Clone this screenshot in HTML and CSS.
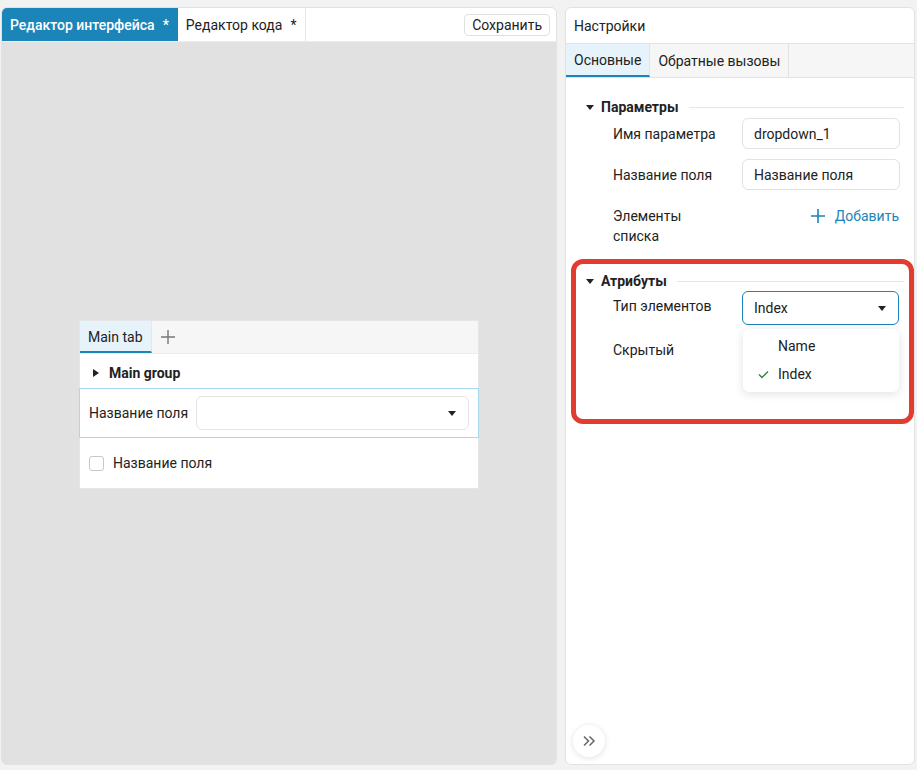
FILE: index.html
```html
<!DOCTYPE html>
<html>
    <head>
        <title>Редактор формы</title>
        <link rel="stylesheet" href="styles.css">
    </head>
    <body>
        <div class="app">
            <div class="editor">
                <div class="editor-bar">
                    <div class="editor-tab active">Редактор интерфейса<span class="star">*</span></div>
                    <div class="editor-tab">Редактор кода<span class="star">*</span></div>
                    <button class="save-btn">Сохранить</button>
                </div>
                <div class="canvas">
                    <div class="widget">
                        <div class="widget-tabs">
                            <div class="widget-tab">Main tab</div>
                            <div class="add-tab">
                                <svg width="16" height="16" viewBox="0 0 16 16"><path d="M8 1v14M1 8h14" stroke="#777" stroke-width="1.4" fill="none"/></svg>
                            </div>
                        </div>
                        <div class="group-title"><span class="tri-right"></span>Main group</div>
                        <div class="field-row">
                            <span class="field-label">Название поля</span>
                            <div class="field-select"><span class="tri-down"></span></div>
                        </div>
                        <div class="check-row">
                            <span class="checkbox"></span>
                            <span>Название поля</span>
                        </div>
                    </div>
                </div>
            </div>

            <div class="settings">
                <div class="settings-head">Настройки</div>
                <div class="settings-tabs">
                    <div class="s-tab active">Основные</div>
                    <div class="s-tab">Обратные вызовы</div>
                </div>
                <div class="settings-body">
                    <div class="section">
                        <div class="section-title"><span class="tri-down"></span>Параметры<span class="rule"></span></div>
                        <div class="prop-row">
                            <div class="prop-label">Имя параметра</div>
                            <div class="prop-input">dropdown_1</div>
                        </div>
                        <div class="prop-row">
                            <div class="prop-label">Название поля</div>
                            <div class="prop-input">Название поля</div>
                        </div>
                        <div class="prop-row top list-row">
                            <div class="prop-label">Элементы списка</div>
                            <div class="add-link">
                                <svg width="14" height="14" viewBox="0 0 14 14"><path d="M7 0v14M0 7h14" stroke="#1b84b8" stroke-width="1.6" fill="none"/></svg>
                                Добавить
                            </div>
                        </div>
                    </div>

                    <div class="section marked">
                        <div class="highlight"></div>
                        <div class="section-title"><span class="tri-down"></span>Атрибуты<span class="rule"></span></div>
                        <div class="prop-row top">
                            <div class="prop-label">Тип элементов</div>
                            <div class="prop-input select">Index<span class="tri-down"></span></div>
                        </div>
                        <div class="prop-row top">
                            <div class="prop-label">Скрытый</div>
                        </div>
                        <div class="menu">
                            <div class="menu-item">Name</div>
                            <div class="menu-item checked">
                                <svg class="check" width="11" height="9" viewBox="0 0 11 9"><path d="M1 4.5l3 3L10 1.5" stroke="#2e8540" stroke-width="1.4" fill="none"/></svg>
                                Index
                            </div>
                        </div>
                    </div>
                </div>
                <div class="collapse-btn">
                    <svg width="14" height="12" viewBox="0 0 14 12"><path d="M2 1.5l4.5 4.5L2 10.5M7.5 1.5L12 6l-4.5 4.5" stroke="#666" stroke-width="1.5" fill="none"/></svg>
                </div>
            </div>
        </div>
    </body>
</html>
```

FILE: styles.css
```css
*{
    box-sizing: border-box;
}
body{
    margin: 0;
    background-color: #f2f2f2;
    font-family: Roboto, "Liberation Sans", sans-serif;
    font-size: 14px;
    color: #222;
}
.app{
    display: flex;
    gap: 8px;
    height: 770px;
    padding: 7px 2px 5px 1px;
}

/* left: editor */
.editor{
    width: 556px;
    display: flex;
    flex-direction: column;
    border: 1px solid #e2e2e2;
    border-radius: 6px;
    overflow: hidden;
    background-color: #e1e1e1;
}
.editor-bar{
    display: flex;
    height: 34px;
    background-color: white;
    border-bottom: 1px solid #ececec;
}
.editor-tab{
    display: flex;
    align-items: center;
    padding: 0 9px 0 8px;
    border-right: 1px solid #e6e6e6;
    color: #222;
}
.editor-tab.active{
    background-color: #1b84b8;
    color: white;
    font-weight: 500;
    border-right: 0;
}
.star{
    margin-left: 8px;
}
.save-btn{
    margin: 6px 6px 5px auto;
    padding: 0 7px;
    border: 1px solid #e0e0e0;
    border-radius: 4px;
    background-color: white;
    font-family: Roboto, "Liberation Sans", sans-serif;
    font-size: 14px;
    color: #222;
}
.canvas{
    flex: 1;
    display: flex;
    align-items: center;
    justify-content: center;
    padding-top: 3px;
}
.widget{
    width: 400px;
    background-color: white;
    border: 1px solid #e6e6e6;
}
.widget-tabs{
    display: flex;
    height: 33px;
    background-color: #f6f6f6;
    border-bottom: 1px solid #ececec;
}
.widget-tab{
    display: flex;
    align-items: center;
    padding: 2px 8px 0;
    background-color: #e7f3fa;
    border-bottom: 2px solid #1b84b8;
    border-right: 1px solid #e6e6e6;
}
.add-tab{
    display: flex;
    align-items: center;
    padding: 0 8px 0 8px;
}
.group-title{
    display: flex;
    align-items: center;
    height: 34px;
    padding: 3px 0 0 13px;
    font-weight: bold;
}
.tri-right{
    width: 0;
    height: 0;
    border-top: 4px solid transparent;
    border-bottom: 4px solid transparent;
    border-left: 6px solid #222;
    margin-right: 10px;
}
.tri-down{
    width: 0;
    height: 0;
    border-left: 4.5px solid transparent;
    border-right: 4.5px solid transparent;
    border-top: 5px solid #222;
}
.field-row{
    display: flex;
    align-items: center;
    gap: 8px;
    height: 50px;
    padding: 0 9px;
    border: 1px solid #a9d9f0;
    margin: 0 -1px;
}
.field-select{
    flex: 1;
    height: 34px;
    border: 1px solid #e4e4e4;
    border-radius: 6px;
    display: flex;
    align-items: center;
    justify-content: flex-end;
    padding-right: 12px;
}
.check-row{
    display: flex;
    align-items: center;
    gap: 9px;
    height: 50px;
    padding: 0 9px;
}
.checkbox{
    width: 15px;
    height: 15px;
    border: 1px solid #c8c8c8;
    border-radius: 3px;
}

/* right: settings */
.settings{
    flex: 1;
    display: flex;
    flex-direction: column;
    position: relative;
    background-color: white;
    border: 1px solid #e2e2e2;
    border-radius: 6px;
}
.settings-head{
    height: 36px;
    display: flex;
    align-items: center;
    padding-left: 8px;
    border-bottom: 1px solid #e2e2e2;
}
.settings-tabs{
    display: flex;
    height: 34px;
    background-color: #f6f6f6;
    border-bottom: 1px solid #e2e2e2;
}
.s-tab{
    display: flex;
    align-items: center;
    padding: 0 8px;
    border-right: 1px solid #e2e2e2;
}
.s-tab.active{
    background-color: #e7f3fa;
    border-bottom: 2px solid #1b84b8;
}
.settings-body{
    flex: 1;
    padding: 19px 10px 0 20px;
}
.section{
    position: relative;
}
.section-title{
    display: flex;
    align-items: center;
    height: 20px;
    font-weight: bold;
}
.section-title .tri-down{
    margin-right: 7px;
}
.rule{
    flex: 1;
    height: 1px;
    background-color: #e6e6e6;
    margin-left: 10px;
}
.prop-row{
    display: flex;
    align-items: center;
    margin-top: 10px;
    padding-left: 27px;
}
.section-title + .prop-row{
    margin-top: 1px;
}
.prop-row.top{
    align-items: flex-start;
}
.prop-row.list-row{
    margin-top: 16px;
}
.prop-label{
    width: 129px;
    padding-right: 22px;
    line-height: 20px;
}
.prop-input{
    width: 158px;
    height: 31px;
    border: 1px solid #e2e2e2;
    border-radius: 6px;
    display: flex;
    align-items: center;
    padding: 0 11px;
}
.prop-input.select{
    width: 157px;
    height: 34px;
    border-color: #1b84b8;
    justify-content: space-between;
    padding-right: 12px;
}
.add-link{
    width: 158px;
    display: flex;
    justify-content: flex-end;
    align-items: center;
    gap: 10px;
    color: #1b84b8;
    line-height: 20px;
    padding-right: 1px;
}
.marked{
    margin-top: 25px;
    height: 140px;
}
.marked .section-title + .prop-row{
    margin-top: 0;
}
.marked .prop-row.top .prop-label{
    padding-top: 5px;
}
.highlight{
    position: absolute;
    left: -15px;
    right: -10px;
    top: -12px;
    height: 165px;
    border: 5px solid #e33b2f;
    border-radius: 12px;
    pointer-events: none;
}
.menu{
    position: absolute;
    left: 157px;
    top: 58px;
    width: 156px;
    padding: 3px 0 4px;
    background-color: white;
    border-radius: 6px;
    box-shadow: 0 2px 10px rgba(0, 0, 0, 0.12);
}
.menu-item{
    position: relative;
    height: 28px;
    display: flex;
    align-items: center;
    padding-left: 35px;
}
.check{
    position: absolute;
    left: 15px;
    top: 10px;
}
.collapse-btn{
    position: absolute;
    left: 7px;
    bottom: 7px;
    width: 32px;
    height: 32px;
    border-radius: 50%;
    background-color: white;
    box-shadow: 0 1px 6px rgba(0, 0, 0, 0.12);
    display: flex;
    align-items: center;
    justify-content: center;
}
```
